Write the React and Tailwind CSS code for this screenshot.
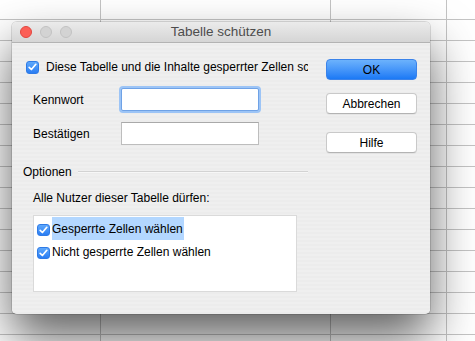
import React from 'react'

const rows = Array.from({ length: 16 }, (_, i) => 19 + i * 21)
const cols = [100, 330, 446]

function Box({ className = '' }) {
  return (
    <span className={`flex shrink-0 items-center justify-center rounded-[3px] border border-[#2f7be6] bg-gradient-to-b from-[#5ea8fb] to-[#2a7df3] ${className}`}>
      <svg width="9" height="8" viewBox="0 0 9 8" fill="none">
        <path d="M1.2 4.3 L3.4 6.5 L7.8 1.3" stroke="#fff" strokeWidth="1.7" strokeLinecap="round" strokeLinejoin="round" />
      </svg>
    </span>
  )
}

function Light({ red }) {
  return (
    <span
      className={
        red
          ? 'w-[12px] h-[12px] rounded-full bg-[#fc5f57] border border-[#e1463f]'
          : 'w-[12px] h-[12px] rounded-full bg-[#d3d3d3] border border-[#c2c2c2]'
      }
    />
  )
}

function Button({ children, primary }) {
  return (
    <div
      className={
        primary
          ? 'h-[21px] w-[91px] flex items-center justify-center rounded-[4px] border border-[#3b83ea] bg-gradient-to-b from-[#6cb2fc] to-[#1a79f5] text-[12px] text-black'
          : 'h-[21px] w-[91px] flex items-center justify-center rounded-[4px] border border-[#c9c9c9] border-b-[#b3b3b3] bg-white text-[12px] text-black shadow-[0_1px_0_rgba(0,0,0,0.04)]'
      }
    >
      {children}
    </div>
  )
}

export default function App() {
  return (
    <div className="relative w-[475px] h-[341px] overflow-hidden bg-white pl-[12px] pt-[22px] font-['Liberation_Sans',Arial,sans-serif]">
      {/* spreadsheet grid behind the sheet */}
      <svg className="absolute inset-0" width="475" height="341">
        {rows.map(y => (
          <line key={y} x1="0" x2="475" y1={y + 0.5} y2={y + 0.5} stroke="#c4c4c4" />
        ))}
        {cols.map(x => (
          <line key={x} x1={x + 0.5} x2={x + 0.5} y1="0" y2="341" stroke="#c4c4c4" />
        ))}
      </svg>

      {/* Dialog */}
      <div className="relative w-[418px] h-[292px] rounded-[5px] overflow-hidden bg-[repeating-linear-gradient(0deg,#ececec_0px,#ececec_2px,#efefef_2px,#efefef_4px)] shadow-[0_24px_48px_rgba(0,0,0,0.62),0_0_0_1px_rgba(0,0,0,0.12)]">
        {/* Title bar */}
        <div className="h-[21px] grid grid-cols-[1fr_auto_1fr] items-center border-b border-[#b3b3b3] bg-gradient-to-b from-[#ebebeb] to-[#d5d5d5]">
          <div className="flex items-center gap-[8px] pl-[8px]">
            <Light red />
            <Light />
            <Light />
          </div>
          <span className="text-[13.5px] text-[#4d4d4d]">Tabelle schützen</span>
          <div />
        </div>

        <div className="flex text-[12px] text-black">
          {/* Left column */}
          <div className="w-[296px] flex flex-col">
            <div className="mt-[17px] pl-[14px] h-[14px] flex items-center gap-[7px]">
              <Box className="w-[13px] h-[13px]" />
              <span className="w-[262px] overflow-hidden whitespace-nowrap">
                Diese Tabelle und die Inhalte gesperrter Zellen schützen
              </span>
            </div>

            <div className="mt-[14px] pl-[21px] h-[23px] flex items-center">
              <span className="w-[88px]">Kennwort</span>
              <div className="w-[138px] h-[23px] rounded-[2px] bg-white border border-[#6fa2e6] shadow-[0_0_0_2px_#9cc4f6]" />
            </div>

            <div className="mt-[11px] pl-[21px] h-[23px] flex items-center">
              <span className="w-[88px]">Bestätigen</span>
              <div className="w-[138px] h-[23px] bg-white border border-[#bdbdbd] border-t-[#a9a9a9]" />
            </div>

            <div className="mt-[20px] pl-[11px] h-[14px] flex items-center gap-[6px]">
              <span>Optionen</span>
              <div className="flex-1 h-[2px] border-t border-[#d3d3d3] border-b border-b-[#f7f7f7]" />
            </div>

            <div className="mt-[12px] pl-[21px] h-[14px] flex items-center">
              Alle Nutzer dieser Tabelle dürfen:
            </div>

            <div className="mt-[10px] ml-[21px] w-[264px] h-[77px] bg-white border border-[#dadada] pt-px pl-[3px]">
              <div className="h-[23px] flex items-center gap-[2px]">
                <Box className="w-[13px] h-[12px] mt-[3px]" />
                <span className="h-full flex items-center bg-[#b3d7ff] pr-[1px]">Gesperrte Zellen wählen</span>
              </div>
              <div className="h-[23px] flex items-center gap-[2px]">
                <Box className="w-[13px] h-[12px] mt-[3px]" />
                <span>Nicht gesperrte Zellen wählen</span>
              </div>
            </div>
          </div>

          {/* Right column */}
          <div className="ml-[18px] pt-[16px] flex flex-col">
            <Button primary>OK</Button>
            <div className="mt-[13px]">
              <Button>Abbrechen</Button>
            </div>
            <div className="mt-[18px]">
              <Button>Hilfe</Button>
            </div>
          </div>
        </div>
      </div>
    </div>
  )
}
